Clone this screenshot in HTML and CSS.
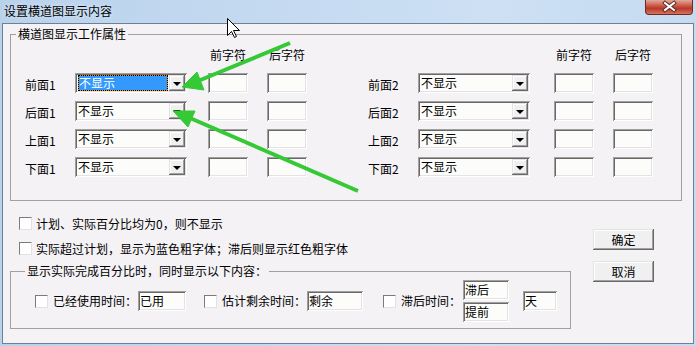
FILE: index.html
```html
<!DOCTYPE html>
<html lang="zh-CN">
<head>
	<meta charset="UTF-8">
	<title>设置横道图显示内容</title>
	<link rel="stylesheet" href="styles.css">
</head>
<body>
	<div class="win">
		<div class="titlebar">
			<span class="title">设置横道图显示内容</span>
			<div class="close">
				<svg width="46" height="14" viewBox="0 0 46 14">
					<path d="M19 3 L28 10 M28 3 L19 10" stroke="#5a2a24" stroke-width="4" stroke-linecap="square"/>
					<path d="M19 3 L28 10 M28 3 L19 10" stroke="#fff" stroke-width="2" stroke-linecap="square"/>
				</svg>
			</div>
		</div>
		<div class="client">
			<fieldset class="group g1">
				<legend>横道图显示工作属性</legend>
				<div class="grid">
					<span></span><span></span><span class="hd">前字符</span><span class="hd">后字符</span>
					<span></span><span></span><span class="hd">前字符</span><span class="hd">后字符</span>

					<span class="lab">前面1</span>
					<div class="combo field"><span class="val"><span class="sel">不显示</span></span><i class="dd"></i></div>
					<span class="tb field"></span><span class="tb field"></span>
					<span class="lab">前面2</span>
					<div class="combo field"><span class="val">不显示</span><i class="dd"></i></div>
					<span class="tb field"></span><span class="tb field"></span>

					<span class="lab">后面1</span>
					<div class="combo field"><span class="val">不显示</span><i class="dd"></i></div>
					<span class="tb field"></span><span class="tb field"></span>
					<span class="lab">后面2</span>
					<div class="combo field"><span class="val">不显示</span><i class="dd"></i></div>
					<span class="tb field"></span><span class="tb field"></span>

					<span class="lab">上面1</span>
					<div class="combo field"><span class="val">不显示</span><i class="dd"></i></div>
					<span class="tb field"></span><span class="tb field"></span>
					<span class="lab">上面2</span>
					<div class="combo field"><span class="val">不显示</span><i class="dd"></i></div>
					<span class="tb field"></span><span class="tb field"></span>

					<span class="lab">下面1</span>
					<div class="combo field"><span class="val">不显示</span><i class="dd"></i></div>
					<span class="tb field"></span><span class="tb field"></span>
					<span class="lab">下面2</span>
					<div class="combo field"><span class="val">不显示</span><i class="dd"></i></div>
					<span class="tb field"></span><span class="tb field"></span>
				</div>
			</fieldset>

			<div class="lower">
				<div class="opts">
					<div class="chk first"><i class="box"></i><span>计划、实际百分比均为0，则不显示</span></div>
					<div class="chk second"><i class="box"></i><span>实际超过计划，显示为蓝色粗字体；滞后则显示红色粗字体</span></div>
					<fieldset class="group g2">
						<legend>显示实际完成百分比时，同时显示以下内容：</legend>
						<div class="line">
							<i class="box"></i><span class="txt">已经使用时间：</span>
							<span class="field edit w48">已用</span>
							<i class="box b2"></i><span class="txt">估计剩余时间：</span>
							<span class="field edit w56">剩余</span>
							<i class="box b3"></i><span class="txt">滞后时间：</span>
							<div class="stack">
								<span class="field edit w46">滞后</span>
								<span class="field edit w46">提前</span>
							</div>
							<span class="field edit w34 day">天</span>
						</div>
					</fieldset>
				</div>
				<div class="btns">
					<button class="btn">确定</button>
					<button class="btn">取消</button>
				</div>
			</div>
		</div>

		<svg class="marks" width="696" height="346" viewBox="0 0 696 346">
			<g fill="#35c935" stroke="#35c935">
				<line x1="290" y1="43" x2="198" y2="81" stroke-width="4"/>
				<polygon points="182,87 197,72 204,90" stroke-width="1"/>
				<line x1="358" y1="191" x2="190" y2="118" stroke-width="4"/>
				<polygon points="173,111 195,111 188,127" stroke-width="1"/>
			</g>
			<polygon points="227.5,18.5 227.5,35.5 231.5,31.5 234.5,37.5 236.5,36.5 233.5,30.5 239.5,30.5" fill="#fff" stroke="#000" stroke-width="1"/>
		</svg>
	</div>
</body>
</html>
```

FILE: styles.css
```css
* {
	padding: 0;
	margin: 0;
	box-sizing: border-box;
}
body {
	background: #bcd4ee;
	font-family: "Noto Sans CJK SC", "Liberation Sans", sans-serif;
	font-size: 12px;
	color: #000;
}
.win {
	width: 696px;
	height: 346px;
	position: relative;
	display: flex;
	flex-direction: column;
	background: linear-gradient(90deg, #b9d2ec, #cde0f4 70%, #c6dbf1);
	overflow: hidden;
}
.titlebar {
	height: 23px;
	display: flex;
	justify-content: space-between;
	align-items: flex-start;
}
.title {
	padding: 4px 0 0 4px;
	line-height: 14px;
	text-shadow: 0 0 4px #e8f2fc;
}
.close {
	width: 48px;
	height: 15px;
	margin-right: 3px;
	border: 1px solid #6e2b23;
	border-top: none;
	border-radius: 0 0 4px 4px;
	background: linear-gradient(#e3a89c, #c8513f 45%, #b8392a 60%, #d7735f);
}
.close svg {
	display: block;
}
.client {
	height: 321px;
	margin: 0 2px;
	border: 1px solid #6d8097;
	background: #f4f2f5;
}

/* group boxes */
.group {
	border: 1px solid #a0a0a0;
	padding: 0;
	min-width: 0;
}
.group legend {
	line-height: 16px;
	padding: 0 2px;
}
.g1 {
	margin: 2px 11px 0 7px;
}
.g1 legend {
	margin-left: 5px;
}
.grid {
	margin: 3px 0 23px 14px;
	display: grid;
	grid-template-columns: 50px 112px 61px 59px 111px 112px 64px 59px;
	grid-auto-rows: 20px;
	row-gap: 8px;
}
.hd {
	justify-self: end;
	width: 40px;
	text-align: center;
	line-height: 20px;
}
.lab {
	justify-self: end;
	width: 50px;
	line-height: 20px;
	padding-top: 2px;
}

/* sunken 3d fields */
.field {
	background: #fcfdfa;
	box-shadow: inset 1px 1px #a0a0a0, inset -1px -1px #fff, inset 2px 2px #696969, inset -2px -2px #e3e3e3;
	padding: 2px;
}
.tb {
	justify-self: end;
	width: 40px;
	height: 20px;
}
.combo {
	display: flex;
	width: 112px;
	height: 20px;
}
.combo .val {
	flex: 1;
	line-height: 16px;
	padding-left: 1px;
	display: flex;
}
.combo .sel {
	flex: 1;
	margin-right: 1px;
	line-height: 14px;
	color: #fff;
	border: 1px dotted #000;
	background: linear-gradient(#3399ff, #3399ff) padding-box, #f09020 border-box;
}
.combo .dd {
	width: 16px;
	height: 16px;
	background: #f0f0f0;
	box-shadow: inset -1px -1px #696969, inset 1px 1px #e3e3e3, inset -2px -2px #a0a0a0, inset 2px 2px #fff;
	display: flex;
	align-items: center;
	justify-content: center;
}
.combo .dd::after {
	content: "";
	border-left: 4px solid transparent;
	border-right: 4px solid transparent;
	border-top: 4px solid #000;
	margin-top: 1px;
}

/* lower part */
.lower {
	display: flex;
}
.opts {
	width: 561px;
	margin-left: 7px;
}
.chk {
	display: flex;
	align-items: center;
	height: 16px;
	padding-left: 9px;
	gap: 4px;
}
.chk.first {
	margin-top: 14px;
}
.chk.second {
	margin-top: 9px;
}
.box {
	display: block;
	width: 13px;
	height: 13px;
	flex: none;
	border: 1px solid;
	border-color: #7b7b7b #e2e2e2 #e2e2e2 #7b7b7b;
	background: #fff;
}
.g2 {
	margin-top: 7px;
}
.g2 legend {
	margin-left: 14px;
}
.line {
	display: flex;
	align-items: center;
	margin: 1px 0 6px 24px;
}
.line .txt {
	margin-left: 5px;
	line-height: 16px;
}
.line .b2 {
	margin-left: 18px;
}
.line .b3 {
	margin-left: 20px;
}
.edit {
	display: block;
	height: 20px;
	line-height: 16px;
	margin-left: 1px;
}
.w48 { width: 48px; }
.w56 { width: 56px; }
.w46 { width: 46px; }
.w34 { width: 34px; }
.stack {
	display: flex;
	flex-direction: column;
	gap: 2px;
	margin-left: 1px;
}
.day {
	margin-left: 14px;
}
.btns {
	display: flex;
	flex-direction: column;
	gap: 11px;
	margin-left: 22px;
	padding-top: 28px;
}
.btn {
	width: 61px;
	height: 21px;
	border: none;
	background: #f0f0f0;
	font-family: inherit;
	font-size: 12px;
	color: #000;
	box-shadow: inset -1px -1px #696969, inset 1px 1px #e3e3e3, inset -2px -2px #a0a0a0, inset 2px 2px #fff;
}
.marks {
	position: absolute;
	left: 0;
	top: 0;
	pointer-events: none;
}
```
